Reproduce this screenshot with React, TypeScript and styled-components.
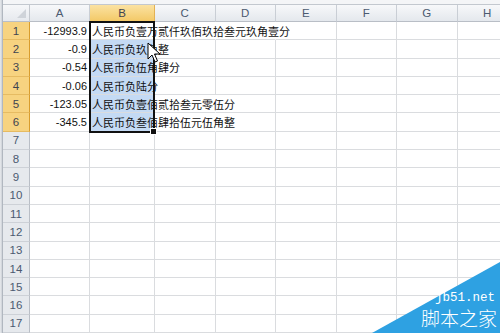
import React from "react";
import styled, { createGlobalStyle } from "styled-components";

const GlobalStyle = createGlobalStyle`
    html, body {
        margin: 0;
        padding: 0;
        width: 500px;
        height: 333px;
        overflow: hidden;
        background: #ffffff;
    }
`;

const COLS = ["A", "B", "C", "D", "E", "F", "G", "H"];
const ROW_H = 18.3;

const rows = [
    { num: "-12993.9", text: "人民币负壹万贰仟玖佰玖拾叁元玖角壹分", spill: 4 },
    { num: "-0.9", text: "人民币负玖角整", spill: 2 },
    { num: "-0.54", text: "人民币负伍角肆分", spill: 2 },
    { num: "-0.06", text: "人民币负陆分", spill: 2 },
    { num: "-123.05", text: "人民币负壹佰贰拾叁元零伍分", spill: 3 },
    { num: "-345.5", text: "人民币负叁佰肆拾伍元伍角整", spill: 3 },
];

const Window = styled.div`
    display: flex;
    width: 500px;
    height: 333px;
    overflow: hidden;
    font-family: "Liberation Sans", "Noto Sans CJK SC", sans-serif;
`;

const Frame = styled.div`
    width: 3px;
    flex: none;
    background: linear-gradient(90deg, #d5d9de 0, #eef0f3 1px, #b9bfc7 2px, #a9b0b9 3px);
`;

const Main = styled.div`
    display: flex;
    flex-direction: column;
    flex: 1;
    min-width: 0;
`;

const TopStrip = styled.div`
    height: 4px;
    flex: none;
    background: #f4f5f7;
    border-bottom: 1px solid #c3c8cf;
`;

const Sheet = styled.div`
    position: relative;
    display: grid;
    grid-template-columns: 27px 60px 65px repeat(6, 60.5px);
    grid-template-rows: 17px repeat(17, ${ROW_H}px);
    width: 560px;
`;

const Corner = styled.div`
    position: relative;
    box-sizing: border-box;
    background: linear-gradient(#f6f7f9, #e6e9ee);
    border-right: 1px solid #c4c8ce;
    border-bottom: 1px solid #b9bec6;
    &::after {
        content: "";
        position: absolute;
        right: 3px;
        bottom: 3px;
        border-left: 9px solid transparent;
        border-bottom: 9px solid #cfd3d9;
    }
`;

const ColHead = styled.div<{ $active?: boolean }>`
    box-sizing: border-box;
    display: flex;
    align-items: center;
    justify-content: center;
    font-size: 11.5px;
    color: ${(p) => (p.$active ? "#3e4350" : "#4b5a70")};
    background: ${(p) =>
        p.$active
            ? "linear-gradient(#fbe2a2, #f3c967)"
            : "linear-gradient(#f7f8fa, #e4e8ed)"};
    border-right: 1px solid ${(p) => (p.$active ? "#e2b154" : "#c9ced5")};
    border-bottom: 1px solid ${(p) => (p.$active ? "#d99d2c" : "#b9bec6")};
`;

const RowHead = styled.div<{ $active?: boolean }>`
    box-sizing: border-box;
    display: flex;
    align-items: center;
    justify-content: center;
    font-size: 11.5px;
    color: ${(p) => (p.$active ? "#3e4350" : "#4b5a70")};
    background: ${(p) => (p.$active ? "#f7d380" : "#e6e9ed")};
    border-right: 1px solid ${(p) => (p.$active ? "#d99d2c" : "#b9bec6")};
    border-bottom: 1px solid ${(p) => (p.$active ? "#e6bb62" : "#cdd1d7")};
`;

const Cell = styled.div<{ $right?: boolean; $sel?: boolean; $num?: boolean }>`
    box-sizing: border-box;
    display: flex;
    align-items: center;
    justify-content: ${(p) => (p.$num ? "flex-end" : "flex-start")};
    padding: 0 2px;
    font-size: 11px;
    color: #111;
    white-space: nowrap;
    overflow: visible;
    background: ${(p) => (p.$sel ? "#c4daf4" : "transparent")};
    border-right: ${(p) => (p.$right === false ? "1px solid transparent" : "1px solid #dadcdf")};
    border-bottom: 1px solid #dadcdf;
`;

const Selection = styled.div`
    position: absolute;
    left: 86px;
    top: 16px;
    width: 66px;
    height: ${ROW_H * 6 + 2}px;
    box-sizing: border-box;
    border: 2px solid #111;
    pointer-events: none;
`;

const FillHandle = styled.div`
    position: absolute;
    right: -4px;
    bottom: -4px;
    width: 5px;
    height: 5px;
    background: #111;
    border: 1px solid #fff;
`;

const Pointer = styled.svg`
    position: absolute;
    left: 144px;
    top: 37px;
`;

const Watermark = styled.div`
    position: absolute;
    right: 0;
    bottom: 0;
    width: 130px;
    height: 72px;
    display: flex;
    flex-direction: column;
    align-items: flex-end;
    justify-content: flex-end;
    gap: 2px;
    padding: 0 3px 5px 0;
    box-sizing: border-box;
`;

const Triangle = styled.svg`
    position: absolute;
    inset: 0;
`;

const SiteUrl = styled.div`
    position: relative;
    font-family: "Liberation Mono", "DejaVu Sans Mono", monospace;
    font-size: 12.5px;
    line-height: 14px;
    color: #ffffff;
    margin-right: 2px;
`;

const SiteName = styled.div`
    position: relative;
    font-family: "Noto Sans CJK SC", sans-serif;
    font-weight: 300;
    font-size: 19px;
    line-height: 21px;
    color: #ffffff;
`;

export default function App() {
    const cells: React.ReactNode[] = [];
    cells.push(<Corner key="corner" />);
    COLS.forEach((c) => cells.push(<ColHead key={c} $active={c === "B"}>{c}</ColHead>));
    for (let r = 0; r < 17; r++) {
        const data = rows[r];
        cells.push(<RowHead key={`h${r}`} $active={!!data}>{r + 1}</RowHead>);
        COLS.forEach((c, i) => {
            const key = `${c}${r}`;
            if (data && c === "A") {
                cells.push(<Cell key={key} $num>{data.num}</Cell>);
            } else if (data && c === "B") {
                cells.push(<Cell key={key} $sel={r > 0} $right={false}>{data.text}</Cell>);
            } else {
                const hidden = !!data && i > 1 && i < data.spill;
                cells.push(<Cell key={key} $right={!hidden} />);
            }
        });
    }

    return (
        <>
            <GlobalStyle />
            <Window>
                <Frame />
                <Main>
                    <TopStrip />
                    <Sheet>
                        {cells}
                        <Selection>
                            <FillHandle />
                        </Selection>
                        <Pointer width="14" height="22" viewBox="0 0 14 22">
                            <path d="M1 1 L1 17 L5 13 L8 20 L10.5 19 L7.5 12 L13 12 Z" fill="#fff" stroke="#000" strokeWidth="1" strokeLinejoin="round" />
                        </Pointer>
                    </Sheet>
                </Main>
            </Window>
            <Watermark>
                <Triangle width="130" height="72" viewBox="0 0 130 72">
                    <polygon points="2,72 130,1 130,72" fill="#2ea1e2" />
                </Triangle>
                <SiteUrl>jb51.net</SiteUrl>
                <SiteName>脚本之家</SiteName>
            </Watermark>
        </>
    );
}
